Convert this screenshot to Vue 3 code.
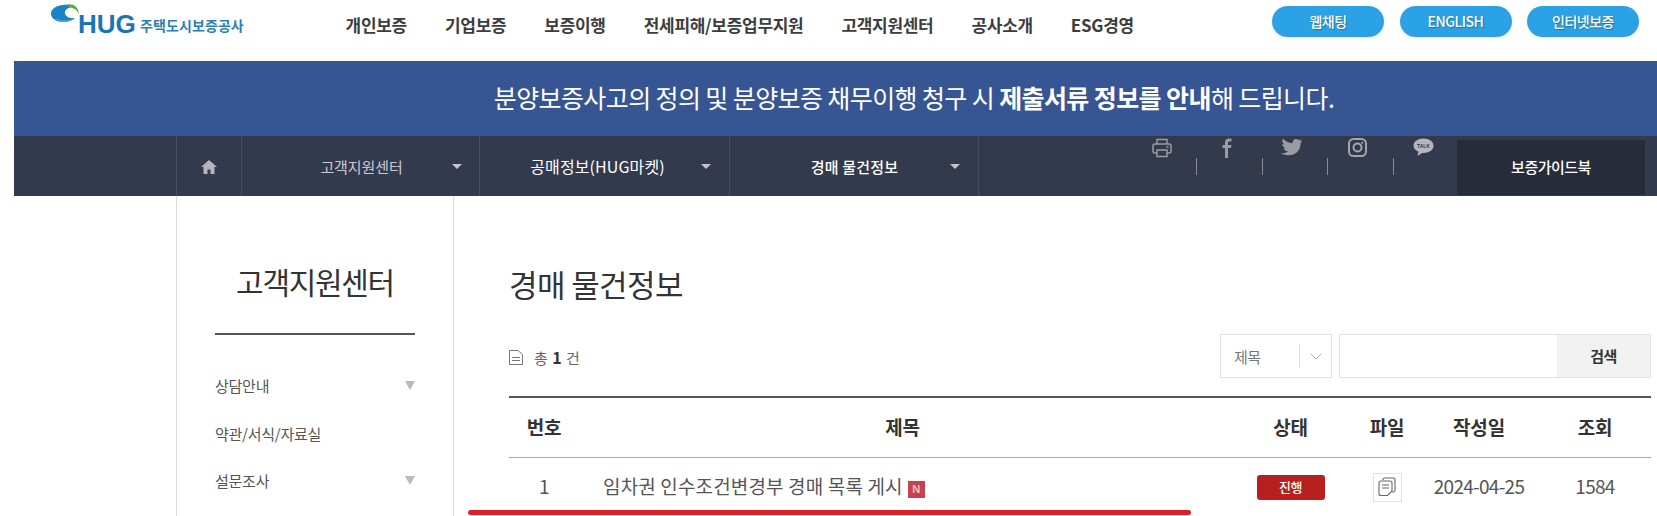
<script setup>
const nav = ['개인보증','기업보증','보증이행','전세피해/보증업무지원','고객지원센터','공사소개','ESG경영']
const side = [
  { t: '상담안내', arrow: true },
  { t: '약관/서식/자료실', arrow: false },
  { t: '설문조사', arrow: true },
]
</script>

<template>
  <div class="page">
    <header class="top">
      <div class="logo">
        <svg class="mark" width="29" height="22" viewBox="0 0 29 22">
          <path d="M17 1 C8 0 0 4 0 9.500 C0 15 6 18 12 18 C17 18 22 16.500 24 14 C19 15 14.500 12.500 14 9.500 C13.500 6.500 16 4 20 3.500Z" fill="#1b82c8"/>
          <path d="M4 14 C8 17 15 17.500 22 15 C17 18.500 8 19 4 14Z" fill="#5bb8e8"/>
          <path d="M16 0.500 C22 -0.500 28 3 27.500 10 C26.500 6.500 24 4.500 20 3.500 C18.500 3 17 2 16 0.500Z" fill="#58a92f"/>
        </svg>
        <span class="hug">HUG</span>
        <span class="kor">주택도시보증공사</span>
      </div>
      <nav class="nav"><a v-for="n in nav" :key="n">{{ n }}</a></nav>
      <div class="pills">
        <a>웹채팅</a><a>ENGLISH</a><a>인터넷보증</a>
      </div>
    </header>

    <section class="band">분양보증사고의 정의 및 분양보증 채무이행 청구 시&nbsp;<b>제출서류 정보를 안내</b>해 드립니다.</section>

    <div class="crumb">
      <div class="home">
        <svg width="16" height="14" viewBox="0 0 16 14"><path d="M8 0 L16 7 H13.500 V14 H9.500 V9.500 H6.500 V14 H2.500 V7 H0Z" fill="#b4b6bb"/></svg>
      </div>
      <div class="cr c1"><span>고객지원센터</span><i></i></div>
      <div class="cr c2"><span>공매정보(HUG마켓)</span><i></i></div>
      <div class="cr c3"><span>경매 물건정보</span><i></i></div>
      <div class="tools">
        <div class="tool">
          <svg width="20" height="20" viewBox="0 0 20 20" fill="none" stroke="#9a9ca1" stroke-width="1.500"><path d="M5 6 V1.500 H15 V6"/><rect x="1" y="6" width="18" height="9" rx="2"/><rect x="5" y="12" width="10" height="6.500" fill="#333a4e"/><path d="M14.500 9 H16.500"/></svg>
        </div>
        <div class="tool">
          <svg width="10" height="20" viewBox="0 0 10 20"><path d="M3 20 V10 H0.500 V7 H3 V4.500 C3 1.500 4.500 0.500 7 0.500 H9.500 V3.500 H7.500 C6.500 3.500 6 4 6 5 V7 H9.500 L9 10 H6 V20Z" fill="#9a9ca1"/></svg>
        </div>
        <div class="tool">
          <svg width="22" height="18" viewBox="0 0 22 18"><path d="M21 2.500 C20 3 19.500 3.200 18.500 3.300 C19.500 2.700 20 2 20.400 1 C19.500 1.500 18.600 1.900 17.600 2 C15.500 -0.200 11.200 1.200 11.600 5.200 C8 5 4.500 3.300 2 0.700 C0.800 2.800 1.500 5 3.200 6.300 C2.400 6.300 1.800 6.100 1.100 5.700 C1.100 8 2.600 9.600 4.800 10.100 C4 10.300 3.400 10.300 2.700 10.200 C3.300 12 5 13.200 7 13.300 C5 14.900 2.600 15.600 0 15.300 C9 20.500 20 15.500 19.600 5 C20.400 4.400 20.600 3.600 21 2.500Z" fill="#9a9ca1"/></svg>
        </div>
        <div class="tool">
          <svg width="19" height="19" viewBox="0 0 19 19" fill="none" stroke="#a4a6ab" stroke-width="2"><rect x="1" y="1" width="17" height="17" rx="4.500"/><circle cx="9.500" cy="9.500" r="4"/><circle cx="14.300" cy="4.700" r="0.700" fill="#a4a6ab" stroke-width="0.800"/></svg>
        </div>
        <div class="tool last">
          <svg width="21" height="19" viewBox="0 0 21 19"><path d="M10.500 0.500 C16 0.500 20.500 3.500 20.500 7.800 C20.500 12 16 15 10.500 15 C10 15 9.500 15 9 14.900 L4.500 18 L5.500 13.800 C2.400 12.500 0.500 10.300 0.500 7.800 C0.500 3.500 5 0.500 10.500 0.500Z" fill="#b4b6ba"/><text x="10.500" y="10" text-anchor="middle" class="talk">TALK</text></svg>
        </div>
      </div>
      <a class="guide">보증가이드북</a>
    </div>

    <div class="main">
      <aside class="side">
        <h2>고객지원센터</h2>
        <ul>
          <li v-for="s in side" :key="s.t"><span>{{ s.t }}</span><i v-if="s.arrow"></i></li>
        </ul>
      </aside>
      <main class="content">
        <h1>경매 물건정보</h1>
        <div class="toolbar">
          <div class="count">
            <svg width="14" height="15" viewBox="0 0 14 15" fill="none" stroke="#777" stroke-width="1"><path d="M0.500 0.500 H9 L13.500 4.500 V14.500 H0.500Z"/><path d="M3 7.500 H11 M3 10.500 H11"/></svg>
            <span>총 <b>1</b> 건</span>
          </div>
          <div class="search">
            <div class="select"><span>제목</span><div class="chev"><svg width="12" height="7" viewBox="0 0 12 7" fill="none" stroke="#aaa"><path d="M1 1 L6 6 L11 1"/></svg></div></div>
            <div class="field"><div class="input"></div><a class="btn">검색</a></div>
          </div>
        </div>
        <div class="table">
          <div class="row head">
            <div class="c-no">번호</div><div class="c-title">제목</div><div class="c-st">상태</div><div class="c-file">파일</div><div class="c-date">작성일</div><div class="c-view">조회</div>
          </div>
          <div class="row body">
            <div class="c-no lift">1</div>
            <div class="c-title left lift">임차권 인수조건변경부 경매 목록 게시<em>N</em></div>
            <div class="c-st cellc"><span class="status">진행</span></div>
            <div class="c-file cellc"><span class="file">
              <svg width="18" height="20" viewBox="0 0 18 20" fill="none" stroke="#666" stroke-width="1.100"><path d="M5 3 V2.500 Q5 1 6.500 1 H15.500 Q17 1 17 2.500 V13.500 Q17 15 15.500 15 H14"/><path d="M3 4 H12 Q14 4 14 6 V14 L9.500 18.500 H3 Q1 18.500 1 16.500 V6 Q1 4 3 4Z" fill="#fff"/><path d="M4 8 H11 M4 11 H11"/></svg>
            </span></div>
            <div class="c-date lift">2024-04-25</div>
            <div class="c-view lift">1584</div>
          </div>
        </div>
      </main>
    </div>
    <div class="redline"></div>
  </div>
</template>

<style>
html, body { margin: 0; background: #fff; overflow: hidden; }
</style>
<style scoped>
.page { position: relative; width: 1657px; height: 516px; overflow: hidden; padding-left: 14px; box-sizing: border-box; font-family: "Noto Sans CJK KR", "Noto Sans", sans-serif; color: #333; letter-spacing: -0.5px; }
a { display: block; }
.top { height: 61px; display: flex; align-items: flex-start; }
.logo { width: 294px; height: 40px; flex: none; position: relative; }
.mark { position: absolute; left: 37px; top: 4px; }
.hug { position: absolute; left: 64px; top: 6px; font: bold 26px/36px "Liberation Sans", sans-serif; letter-spacing: 0; color: #1a75b5; }
.kor { position: absolute; left: 126px; top: 13px; font-size: 14px; line-height: 24px; font-weight: 700; color: #2a7fba; letter-spacing: 0.100px; white-space: nowrap; }
.nav { display: flex; gap: 38px; padding-top: 11px; margin-left: 37.600px; }
.nav a { font-size: 17px; line-height: 27px; font-weight: 700; color: #3d3d3d; white-space: nowrap; letter-spacing: -0.300px; }
.pills { display: flex; gap: 15.500px; position: absolute; left: 1272px; top: 6px; }
.pills a { width: 112px; height: 31px; border-radius: 16px; background: #2ba2e6; color: #fff; font-size: 14px; font-weight: 500; line-height: 31px; text-align: center; letter-spacing: -0.500px; text-shadow: 1px 1px 1px rgba(0,0,0,.3); }
.band { height: 75px; box-sizing: border-box; padding: 0 0 3px 157px; background: #375592; color: #fff; font-size: 25px; display: flex; align-items: center; justify-content: center; white-space: pre; letter-spacing: -0.600px; }
.band b { font-weight: 700; }
.crumb { height: 60px; background: #333a4e; display: flex; padding-left: 162px; position: relative; }
.home { width: 65.500px; box-sizing: border-box; border-left: 1px solid #474d60; border-right: 1px solid #474d60; display: flex; align-items: center; justify-content: center; padding-top: 2px; }
.cr { border-right: 1px solid #474d60; position: relative; display: flex; align-items: center; justify-content: center; color: #fff; font-size: 15px; font-weight: 500; box-sizing: border-box; letter-spacing: -0.100px; }
.cr i { position: absolute; right: 18px; top: 28px; border: 5px solid transparent; border-top: 5px solid #c3c5ca; border-bottom: 0; }
.c1 { width: 238px; color: #c9cad0; font-weight: 400; padding-left: 3px; }
.c1 i { right: 17px; }
.c2 { width: 250px; padding-right: 13px; font-size: 16px; font-weight: 400; letter-spacing: 0.100px; }
.c3 { width: 249px; padding-left: 2px; letter-spacing: 0.200px; }
.tools { position: absolute; left: 1118px; top: 0; display: flex; }
.tool { width: 65.400px; height: 40px; display: flex; justify-content: center; padding: 2px 6px 0 0; box-sizing: border-box; position: relative; }
.tool::after { content: ''; position: absolute; right: 0; top: 22px; height: 17px; width: 1px; background: #8a8c94; }
.tool.last::after { display: none; }
.talk { font: bold 5px "Liberation Sans", sans-serif; fill: #333a4e; letter-spacing: 0; }
.guide { position: absolute; left: 1443px; top: 4px; width: 188px; height: 55px; background: #272c3b; color: #fff; font-size: 15px; font-weight: 500; line-height: 53px; text-align: center; }
.main { display: flex; margin-left: 162px; height: 320px; }
.side { width: 278px; flex: none; box-sizing: border-box; border-left: 1px solid #ddd; border-right: 1px solid #ddd; padding: 0 38px; }
.side h2 { margin: 0; padding-top: 63px; height: 139px; box-sizing: border-box; border-bottom: 2px solid #555; font-size: 30px; line-height: 44px; font-weight: 400; text-align: center; color: #333; letter-spacing: -1.300px; }
.side ul { list-style: none; margin: 0; padding: 37px 0 0; }
.side li { height: 47.500px; display: flex; justify-content: space-between; font-size: 15px; color: #555; line-height: 27px; letter-spacing: -0.250px; }
.side li i { margin-top: 9px; width: 0; height: 0; border: 5px solid transparent; border-top: 9px solid #bbb; border-bottom: 0; }
.content { width: 1142px; flex: none; margin-left: 55px; }
.content h1 { margin: 0; padding-top: 66px; font-size: 31px; line-height: 44px; font-weight: 400; color: #333; letter-spacing: -0.600px; }
.toolbar { display: flex; justify-content: space-between; align-items: center; margin-top: 28px; height: 44px; }
.count { display: flex; align-items: center; gap: 11px; font-size: 15px; color: #666; letter-spacing: 0; word-spacing: 1px; padding-top: 2px; }
.count b { color: #333; font-size: 16px; }
.search { display: flex; gap: 7px; }
.select { width: 112px; height: 44px; border: 1px solid #e2e2e2; box-sizing: border-box; display: flex; align-items: center; padding-left: 13px; font-size: 15px; color: #777; position: relative; }
.select span { flex: 1; }
.chev { width: 32px; height: 24px; border-left: 1px solid #ddd; box-sizing: border-box; display: flex; align-items: center; justify-content: center; }
.field { width: 312px; height: 44px; border: 1px solid #e2e2e2; box-sizing: border-box; display: flex; }
.input { flex: 1; }
.btn { width: 93px; background: #f2f2f2; font-size: 15px; font-weight: 700; text-align: center; line-height: 41px; color: #333; }
.table { margin-top: 18px; border-top: 2px solid #555; }
.row { display: flex; align-items: center; }
.head { height: 60px; box-sizing: border-box; border-bottom: 1px solid #aaa; font-size: 19px; font-weight: 700; color: #333; letter-spacing: -0.200px; padding-bottom: 2px; }
.body { height: 58px; font-size: 19px; color: #555; letter-spacing: -0.700px; }
.row > div { text-align: center; flex: none; }
.row > .lift { padding-bottom: 4px; }
.row > .cellc { display: flex; justify-content: center; }
.c-no { width: 70px; }
.c-title { width: 647px; }
.row > .c-title.left { text-align: left; padding-left: 24px; box-sizing: border-box; display: flex; align-items: center; letter-spacing: 0.150px; }
.c-title em { font: bold 11px/17px "Liberation Sans", sans-serif; font-style: normal; width: 17px; height: 17px; background: #c9404f; color: #f3c6cc; text-align: center; margin: 8px 0 0 5px; letter-spacing: 0; }
.c-st { width: 129px; }
.c-file { width: 64px; }
.c-date { width: 120px; }
.c-view { width: 112px; }
.status { display: block; width: 68px; height: 25px; border-radius: 3px; background: #b82020; color: #fff; font-size: 13px; line-height: 24px; font-weight: 500; letter-spacing: -0.500px; }
.file { display: flex; width: 29px; height: 29px; border: 1px solid #e2e2e2; box-sizing: border-box; align-items: center; justify-content: center; }
.redline { position: absolute; left: 468px; top: 510px; width: 723px; height: 5px; border-radius: 2.500px; background: #e31e26; }
</style>
